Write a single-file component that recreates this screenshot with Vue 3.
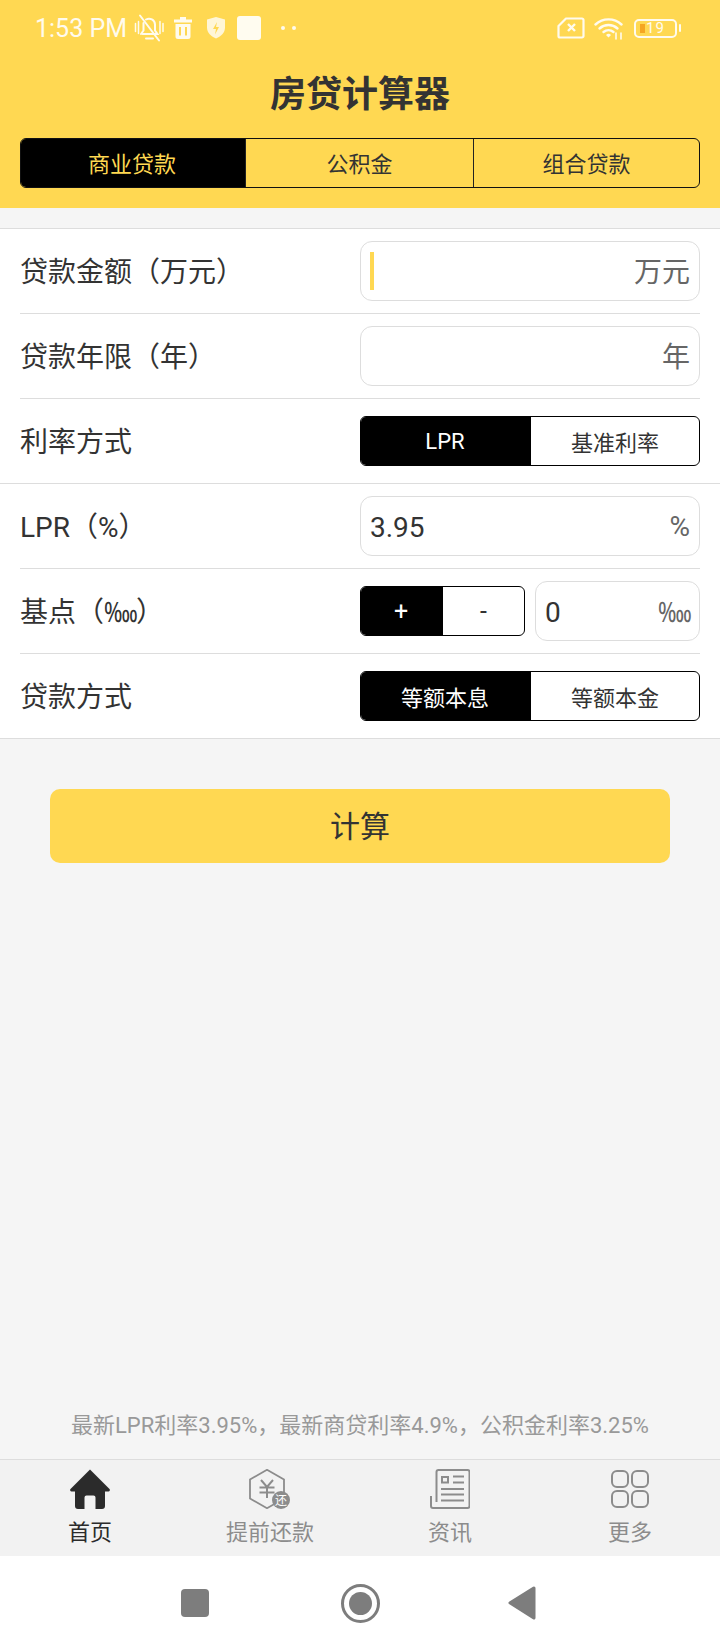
<script setup>
import { ref } from "vue";

const loanTabs = ["商业贷款", "公积金", "组合贷款"];
const activeTab = ref(0);

const rateType = ref(0);
const sign = ref(0);
const repayType = ref(0);

const navItems = [
  { key: "home", label: "首页" },
  { key: "prepay", label: "提前还款" },
  { key: "news", label: "资讯" },
  { key: "more", label: "更多" },
];
const activeNav = ref("home");
</script>

<template>
  <div class="page">
    <header class="header">
      <div class="status">
        <span class="time">1:53 PM</span>
        <svg class="ic-bell" width="30" height="28" viewBox="0 0 30 28" fill="none" stroke="#fffbee" stroke-width="2" stroke-linecap="round">
          <path d="M8.500 20h15l-2.500-3.500v-6a6 6 0 0 0-9-5" />
          <path d="M9.500 9v7.500L7 20" />
          <path d="M12 24.500h7" />
          <path d="M6 1.500l19 25" />
          <path d="M1.500 9.500v8M4.500 7.500v12M26 7.500v12M29 9.500v8" stroke-width="1.500" />
        </svg>
        <svg class="ic-trash" width="18" height="22" viewBox="0 0 18 22" fill="#fffbee">
          <path d="M6 0h6v2.500h6v3H0v-3h6zM1.500 7h15v12.500a2.500 2.500 0 0 1-2.500 2.500H4a2.500 2.500 0 0 1-2.500-2.500zM5 10v8.500h2V10zm6 0v8.500h2V10z" fill-rule="evenodd" />
        </svg>
        <svg class="ic-shield" width="20" height="24" viewBox="0 0 20 24">
          <path d="M10 1l9 2.500v8c0 5-3.500 8.500-9 11-5.500-2.500-9-6-9-11v-8z" fill="#fff6d8" />
          <path d="M11 6l-4 7h3l-1 5.500 4-7.500h-3z" fill="#ffd852" />
        </svg>
        <span class="white-box"></span>
        <span class="dots"><i></i><i></i></span>
        <span class="status-gap"></span>
        <svg class="ic-sim" width="28" height="22" viewBox="0 0 28 22" fill="none" stroke="#fffbee" stroke-width="2.200">
          <path d="M9 1.500h16a1.500 1.500 0 0 1 1.500 1.500v16a1.500 1.500 0 0 1-1.500 1.500H3A1.500 1.500 0 0 1 1.500 19V9z" stroke-linejoin="round" />
          <path d="M11 7l7 7M18 7l-7 7" stroke-width="2.400" />
        </svg>
        <svg class="ic-wifi" width="30" height="23" viewBox="0 0 30 23" fill="none" stroke="#fffbee" stroke-width="2.400" stroke-linecap="round">
          <path d="M1.500 7.500a19 19 0 0 1 26 0" />
          <path d="M5.500 11.500a13.500 13.500 0 0 1 18 0" />
          <path d="M9.500 15a8 8 0 0 1 10 0" />
          <path d="M14.500 20.500l-2.500-2.500a3.500 3.500 0 0 1 5 0z" fill="#fffbee" stroke="none" />
          <path d="M22 16v6M27 16v6" stroke-width="1.600" />
        </svg>
        <div class="battery">
          <span class="battery-body"><i></i><b>19</b></span>
          <span class="battery-cap"></span>
        </div>
      </div>
      <h1 class="title">房贷计算器</h1>
      <div class="tabs">
        <button
          v-for="(tab, i) in loanTabs"
          :key="tab"
          class="tab"
          :class="{ active: activeTab === i }"
          @click="activeTab = i"
        >
          {{ tab }}
        </button>
      </div>
    </header>

    <section class="form">
      <div class="row">
        <label>贷款金额（万元）</label>
        <div class="field">
          <span class="caret"></span>
          <span class="unit">万元</span>
        </div>
      </div>
      <div class="row">
        <label>贷款年限（年）</label>
        <div class="field">
          <span class="unit">年</span>
        </div>
      </div>
      <div class="row last">
        <label>利率方式</label>
        <div class="toggle">
          <button :class="{ on: rateType === 0 }" @click="rateType = 0">LPR</button>
          <button :class="{ on: rateType === 1 }" @click="rateType = 1">基准利率</button>
        </div>
      </div>
      <div class="row">
        <label>LPR（%）</label>
        <div class="field">
          <span class="value">3.95</span>
          <span class="unit latin">%</span>
        </div>
      </div>
      <div class="row">
        <label>基点（<span class="permille">‱</span>）</label>
        <div class="basis">
          <div class="toggle sign">
            <button :class="{ on: sign === 0 }" @click="sign = 0">+</button>
            <button :class="{ on: sign === 1 }" @click="sign = 1">-</button>
          </div>
          <div class="field">
            <span class="value">0</span>
            <span class="unit latin permille">‱</span>
          </div>
        </div>
      </div>
      <div class="row last">
        <label>贷款方式</label>
        <div class="toggle">
          <button :class="{ on: repayType === 0 }" @click="repayType = 0">等额本息</button>
          <button :class="{ on: repayType === 1 }" @click="repayType = 1">等额本金</button>
        </div>
      </div>
    </section>

    <button class="calc">计算</button>

    <p class="tip">最新LPR利率3.95%，最新商贷利率4.9%，公积金利率3.25%</p>

    <nav class="tabbar">
      <a
        v-for="item in navItems"
        :key="item.key"
        class="nav-item"
        :class="{ active: activeNav === item.key }"
        @click="activeNav = item.key"
      >
        <svg v-if="item.key === 'home'" width="40" height="40" viewBox="0 0 40 40" fill="#2b2b2b">
          <path d="M20 0.500L39.500 20a1.500 1.500 0 0 1-1 2.500H35v14.500a3 3 0 0 1-3 3h-6.500V28.500a2 2 0 0 0-2-2h-7a2 2 0 0 0-2 2V40H8a3 3 0 0 1-3-3V22.500H1.500a1.500 1.500 0 0 1-1-2.500z" />
        </svg>
        <svg v-else-if="item.key === 'prepay'" width="42" height="40" viewBox="0 0 42 40" fill="none" stroke="#8c8c8c" stroke-width="1.800">
          <path d="M18 0.800l17 9.700v19l-17 9.700-17-9.700v-19z" />
          <path d="M12 11l6 7 6-7M10.500 18.500h15M10.500 23.500h15M18 18v11" stroke-width="2" />
          <circle cx="32" cy="31" r="9" fill="#8c8c8c" stroke="none" />
          <text x="32" y="35.500" text-anchor="middle" class="badge-text">还</text>
        </svg>
        <svg v-else-if="item.key === 'news'" width="40" height="40" viewBox="0 0 40 40" fill="none" stroke="#8c8c8c" stroke-width="2">
          <path d="M6.500 33V3a2 2 0 0 1 2-2h29a2 2 0 0 1 2 2v34a2 2 0 0 1-2 2H3a2 2 0 0 1-2-2V27" stroke-linejoin="round" />
          <rect x="12" y="8" width="6" height="5.500" />
          <path d="M23 7.500h11M23 13.500h11M11 20h23M11 25.500h23M11 31.500h23" />
        </svg>
        <svg v-else width="40" height="40" viewBox="0 0 40 40" fill="none" stroke="#8c8c8c" stroke-width="2">
          <rect x="2" y="2" width="16" height="16" rx="5" />
          <rect x="22" y="2" width="16" height="16" rx="5" />
          <rect x="2" y="22" width="16" height="16" rx="5" />
          <rect x="22" y="22" width="16" height="16" rx="5" />
        </svg>
        <span>{{ item.label }}</span>
      </a>
    </nav>

    <div class="sysnav">
      <span class="sys-square"></span>
      <span class="sys-circle"><i></i></span>
      <svg width="28" height="34" viewBox="0 0 28 34" fill="#7d7d7d">
        <path d="M26 0.500a1.500 1.500 0 0 1 1.500 1.500v30a1.500 1.500 0 0 1-2.500 1.200L1 18a1.500 1.500 0 0 1 0-2.200L25 0.800z" />
      </svg>
    </div>
  </div>
</template>

<style>
body {
  background: #f5f5f5;
}
</style>

<style scoped>
.page {
  display: flex;
  flex-direction: column;
  width: 720px;
  height: 1650px;
  background: #f5f5f5;
  color: #333;
  font-family: Roboto, "Noto Sans CJK SC", sans-serif;
  overflow: hidden;
}

button {
  font-family: inherit;
  cursor: pointer;
  padding: 0;
  border: none;
  background: none;
}

.header {
  height: 208px;
  flex-shrink: 0;
  background: #ffd852;
  padding: 0 20px;
  box-sizing: border-box;
}

.status {
  display: flex;
  align-items: center;
  height: 56px;
  padding: 0 19px 0 15px;
}

.time {
  font-size: 25px;
  color: #fffbee;
  margin-right: 7px;
}

.ic-trash {
  margin-left: 10px;
}

.ic-shield {
  margin-left: 14px;
}

.white-box {
  width: 24px;
  height: 24px;
  margin-left: 11px;
  border-radius: 3px;
  background: #fffcf0;
}

.dots {
  display: flex;
  gap: 7px;
  margin-left: 20px;
}

.dots i {
  width: 4px;
  height: 4px;
  border-radius: 50%;
  background: #fffbee;
}

.status-gap {
  flex: 1;
}

.ic-wifi {
  margin-left: 9px;
}

.battery {
  display: flex;
  align-items: center;
  margin-left: 10px;
}

.battery-body {
  display: flex;
  align-items: center;
  width: 39px;
  height: 15px;
  border: 2px solid #fffbee;
  border-radius: 5px;
}

.battery-body i {
  width: 5px;
  height: 9px;
  margin-left: 4px;
  background: #f5a623;
}

.battery-body b {
  font-size: 15px;
  line-height: 1;
  font-weight: 400;
  color: #fffbee;
  letter-spacing: 1px;
  margin-left: 1px;
}

.battery-cap {
  width: 2px;
  height: 8px;
  margin-left: 2px;
  border-radius: 1px;
  background: #fffbee;
}

.title {
  margin: 2px 0 0;
  height: 74px;
  line-height: 74px;
  text-align: center;
  font-size: 36px;
  font-weight: 700;
  color: #333;
}

.tabs {
  display: flex;
  height: 50px;
  margin-top: 6px;
  border: 1.500px solid #111;
  box-sizing: border-box;
  border-radius: 6px;
  overflow: hidden;
}

.tab {
  flex: 1;
  padding-bottom: 3px;
  font-size: 22px;
  color: #333;
  border-left: 1.500px solid #222;
}

.tab:first-child {
  flex: 0 0 224px;
  padding-right: 2px;
  border-left: none;
}

.tab:last-child {
  flex: 0 0 226px;
}

.tab.active {
  background: #000;
  color: #ffd852;
}

.form {
  margin-top: 20px;
  background: #fff;
  border-top: 1px solid #ddd;
  border-bottom: 1px solid #ddd;
}

.row {
  display: flex;
  align-items: center;
  justify-content: space-between;
  height: 85px;
  box-sizing: border-box;
  margin: 0 20px;
  border-bottom: 1px solid #ddd;
}

.row.last {
  margin: 0;
  padding: 0 20px;
}

.row:last-child {
  height: 84px;
  border-bottom: none;
}

label {
  padding-bottom: 2px;
  font-size: 28px;
  color: #333;
}

/* the installed glyph is wider than the one in the app */
.permille {
  display: inline-block;
  width: 32px;
  transform: scaleX(0.78);
  transform-origin: left center;
  white-space: nowrap;
}

.field {
  display: flex;
  align-items: center;
  flex: none;
  width: 340px;
  height: 60px;
  box-sizing: border-box;
  padding: 0 9px;
  background: #fff;
  border: 1px solid #ddd;
  border-radius: 12px;
}

.caret {
  width: 4px;
  height: 38px;
  background: #ffd852;
}

.value {
  padding-top: 2px;
  font-size: 28px;
  color: #333;
}

.unit {
  margin-left: auto;
  padding-bottom: 2px;
  font-size: 28px;
  color: #666;
}

.unit.latin {
  padding-bottom: 0;
}

.toggle {
  display: flex;
  flex: none;
  width: 340px;
  height: 50px;
  box-sizing: border-box;
  background: #fff;
  border: 1px solid #000;
  border-radius: 6px;
  overflow: hidden;
}

.toggle button {
  flex: 1;
  font-size: 22px;
  color: #333;
}

.toggle button:first-child {
  flex: 0 0 170px;
  padding-right: 2px;
}

.toggle button.on {
  background: #000;
  color: #fff;
}

.basis {
  display: flex;
  align-items: center;
  gap: 10px;
}

.toggle.sign {
  width: 165px;
}

.toggle.sign button {
  font-size: 25px;
}

.toggle.sign button:first-child {
  flex: 0 0 82px;
}

.basis .field {
  width: 165px;
}

.calc {
  flex: none;
  align-self: center;
  width: 620px;
  height: 74px;
  margin-top: 50px;
  padding-bottom: 5px;
  border-radius: 10px;
  background: #ffd852;
  font-size: 30px;
  color: #333;
}

.tip {
  margin: auto 0 0;
  height: 34px;
  line-height: 34px;
  padding-bottom: 16px;
  text-align: center;
  font-size: 22px;
  color: #999;
}

.tabbar {
  display: flex;
  flex: none;
  height: 97px;
  box-sizing: border-box;
  padding-top: 9px;
  background: #f2f2f2;
  border-top: 1px solid #ddd;
}

.nav-item {
  flex: 1;
  display: flex;
  flex-direction: column;
  align-items: center;
  font-size: 22px;
  line-height: 30px;
  color: #8c8c8c;
}

.nav-item svg {
  display: block;
  margin-bottom: 9px;
}

.nav-item.active {
  color: #2b2b2b;
}

.badge-text {
  font-size: 12px;
  fill: #fff;
  stroke: none;
}

.sysnav {
  flex: none;
  display: flex;
  align-items: center;
  justify-content: space-between;
  height: 94px;
  box-sizing: border-box;
  padding: 0 184px 0 181px;
  background: #fff;
}

.sys-square {
  width: 28px;
  height: 28px;
  border-radius: 4px;
  background: #7d7d7d;
}

.sys-circle {
  display: flex;
  align-items: center;
  justify-content: center;
  width: 39px;
  height: 39px;
  margin-left: 3px;
  box-sizing: border-box;
  border: 3px solid #7d7d7d;
  border-radius: 50%;
}

.sys-circle i {
  width: 23px;
  height: 23px;
  border-radius: 50%;
  background: #7d7d7d;
}
</style>
